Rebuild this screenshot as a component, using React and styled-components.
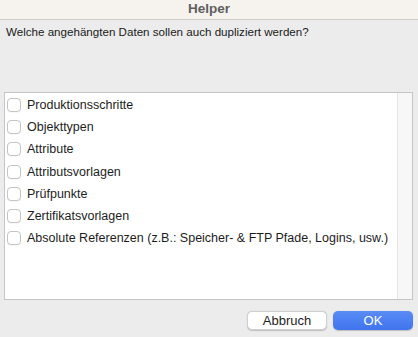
import React, { useState } from 'react';
import styled, { createGlobalStyle } from 'styled-components';

const GlobalStyle = createGlobalStyle`
  html, body {
    margin: 0;
    padding: 0;
    background: #ececec;
  }
  body {
    font-family: "Liberation Sans", Arial, sans-serif;
    font-size: 12px;
    color: #1d1d1d;
  }
`;

const Window = styled.div`
  width: 418px;
  height: 337px;
  display: flex;
  flex-direction: column;
  background: #ececec;
  overflow: hidden;
`;

const TitleBar = styled.div`
  height: 20px;
  flex-shrink: 0;
  display: flex;
  align-items: center;
  justify-content: center;
  padding-bottom: 3px;
  box-sizing: border-box;
  background: #f6f3ef;
  border-bottom: 1px solid #cfcdcb;
  font-weight: bold;
  font-size: 13.5px;
  color: #5f5f5f;
`;

const Body = styled.div`
  flex: 1;
  display: flex;
  flex-direction: column;
  padding: 5px 5px 5px 4px;
`;

const Question = styled.div`
  padding-left: 2px;
  font-size: 11.6px;
  line-height: 14px;
  color: #1a1a1a;
`;

const ListBox = styled.div`
  margin-top: 53px;
  height: 208px;
  box-sizing: border-box;
  display: flex;
  background: #fff;
  border: 1px solid #c6c6c6;
`;

const List = styled.div`
  flex: 1;
  display: flex;
  flex-direction: column;
  padding: 1px 0 0 2px;
`;

const ScrollTrack = styled.div`
  width: 14px;
  background: #f7f7f7;
  border-left: 1px solid #e4e4e4;
`;

const Row = styled.label`
  height: 22.2px;
  display: flex;
  align-items: center;
  gap: 6px;
  font-size: 12.5px;
  color: #1d1d1d;
  cursor: default;
`;

const Box = styled.span`
  width: 14px;
  height: 14px;
  box-sizing: border-box;
  border: 1px solid ${(p) => (p.checked ? '#3a78f2' : '#c4c4c4')};
  border-radius: 4px;
  background: ${(p) => (p.checked ? '#3a78f2' : '#fff')};
  box-shadow: 0 0.5px 0.5px rgba(0, 0, 0, 0.06);
  display: flex;
  align-items: center;
  justify-content: center;
  color: #fff;
  font-size: 10px;
  line-height: 1;
`;

const Footer = styled.div`
  display: flex;
  justify-content: flex-end;
  gap: 6px;
  margin-top: 11px;
`;

const Button = styled.button`
  width: 80px;
  height: 19px;
  border-radius: 5px;
  font-family: "Liberation Sans", Arial, sans-serif;
  font-size: 13px;
  padding: 0;
  border: ${(p) => (p.primary ? 'none' : '0.5px solid #d0d0d0')};
  background: ${(p) => (p.primary ? 'linear-gradient(#5a8cf5, #3f74ee)' : '#fff')};
  color: ${(p) => (p.primary ? '#fff' : '#1d1d1d')};
  box-shadow: 0 0.5px 1px rgba(0, 0, 0, 0.2);
`;

const items = [
  'Produktionsschritte',
  'Objekttypen',
  'Attribute',
  'Attributsvorlagen',
  'Prüfpunkte',
  'Zertifikatsvorlagen',
  'Absolute Referenzen (z.B.: Speicher- & FTP Pfade, Logins, usw.)',
];

const App = () => {
  const [checked, setChecked] = useState({});

  const toggle = (name) => setChecked({ ...checked, [name]: !checked[name] });

  return (
    <Window>
      <GlobalStyle />
      <TitleBar>Helper</TitleBar>
      <Body>
        <Question>Welche angehängten Daten sollen auch dupliziert werden?</Question>
        <ListBox>
          <List>
            {items.map((name) => (
              <Row key={name} onClick={() => toggle(name)}>
                <Box checked={checked[name]}>{checked[name] ? '✓' : ''}</Box>
                {name}
              </Row>
            ))}
          </List>
          <ScrollTrack />
        </ListBox>
        <Footer>
          <Button>Abbruch</Button>
          <Button primary>OK</Button>
        </Footer>
      </Body>
    </Window>
  );
};

export default App;
